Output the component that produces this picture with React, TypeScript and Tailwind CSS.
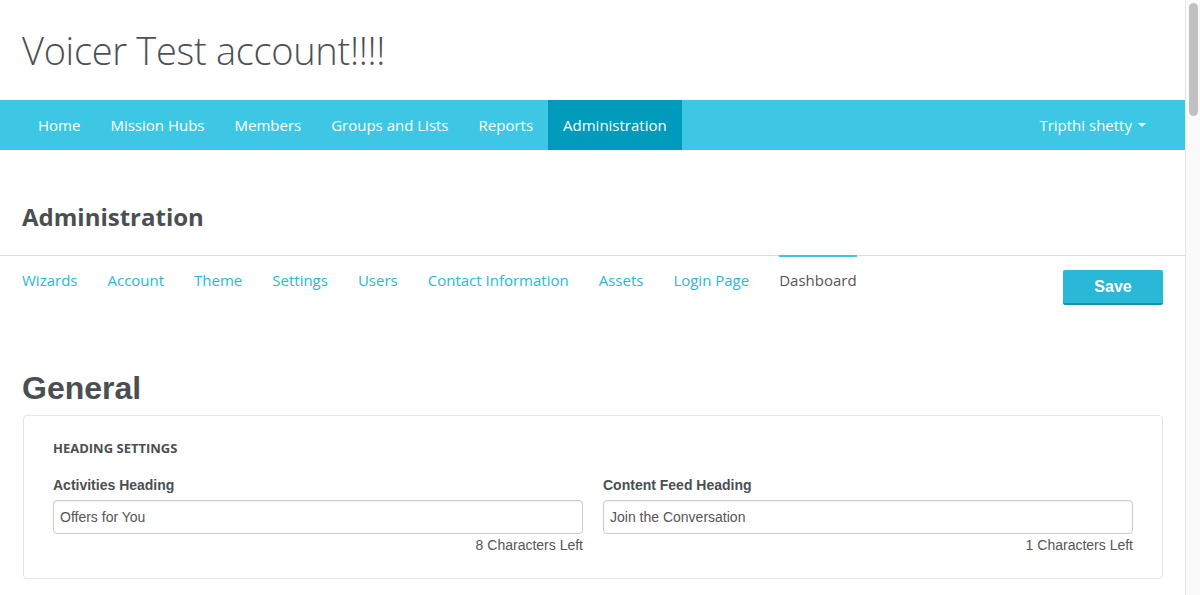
const navItems = ['Home', 'Mission Hubs', 'Members', 'Groups and Lists', 'Reports', 'Administration'];
const tabs = ['Wizards', 'Account', 'Theme', 'Settings', 'Users', 'Contact Information', 'Assets', 'Login Page', 'Dashboard'];

function Field({ label, value, left }: { label: string; value: string; left: string }) {
  return (
    <div className="flex-1 flex flex-col">
      <label className="text-[14px] font-bold text-[#4a4f52] leading-[20px] mb-[5px] font-['Liberation_Sans',Arial,sans-serif]">
        {label}
      </label>
      <div className="h-[34px] border border-[#cccccc] rounded-[4px] px-[6px] flex items-center text-[14px] text-[#555] font-['Liberation_Sans',Arial,sans-serif] shadow-[inset_0_1px_1px_rgba(0,0,0,0.05)]">
        {value}
      </div>
      <div className="text-right text-[14px] text-[#555] leading-[20px] mt-px font-['Liberation_Sans',Arial,sans-serif]">
        {left}
      </div>
    </div>
  );
}

export default function App() {
  return (
    <div className="flex w-[1200px] h-[595px] overflow-hidden bg-white font-['Open_Sans',sans-serif]">
      <div className="w-[1185px] flex flex-col">
        {/* Account title */}
        <div className="h-[100px] flex items-center px-[22px]">
          <h1 className="text-[38px] font-light text-[#4b5155] leading-none tracking-[-0.3px]">Voicer Test account!!!!</h1>
        </div>

        {/* Main nav */}
        <nav className="h-[50px] bg-[#3ec6e5] flex items-stretch justify-between pl-[23px] pr-[24px] text-white text-[15px]">
          <div className="flex">
            {navItems.map((item) => (
              <div
                key={item}
                className={`px-[15px] flex items-center ${item === 'Administration' ? 'bg-[#009abb]' : ''}`}
              >
                {item}
              </div>
            ))}
          </div>
          <div className="px-[15px] flex items-center gap-[6px]">
            Tripthi shetty
            <span className="w-0 h-0 border-l-[4px] border-r-[4px] border-t-[4px] border-l-transparent border-r-transparent border-t-white" />
          </div>
        </nav>

        {/* Page heading */}
        <div className="h-[106px] pt-[50px] px-[22px] border-b border-[#dddddd]">
          <h2 className="text-[24px] font-bold text-[#4a4f52] leading-[33px]">Administration</h2>
        </div>

        {/* Sub tabs */}
        <div className="flex justify-between items-start pl-[22px] pr-[22px]">
          <div className="flex gap-[30px] text-[15px]">
            {tabs.map((tab) =>
              tab === 'Dashboard' ? (
                <div key={tab} className="-mt-px border-t-2 border-[#3ec6e5] pt-[13px] text-[#555] leading-[20px]">
                  {tab}
                </div>
              ) : (
                <div key={tab} className="pt-[14px] text-[#29b8d8] leading-[20px]">
                  {tab}
                </div>
              )
            )}
          </div>
          <button className="mt-[14px] w-[100px] h-[35px] bg-[#29b8d8] border-b-2 border-[#1b8fab] rounded-[2px] text-white text-[16px] font-bold font-['Liberation_Sans',Arial,sans-serif]">
            Save
          </button>
        </div>

        {/* General section */}
        <div className="px-[22px] pt-[65px]">
          <h3 className="text-[32px] font-bold text-[#4a4f52] leading-[36px] font-['Liberation_Sans',Arial,sans-serif]">General</h3>
          <div className="mt-[9px] ml-px border border-[#e5e5e5] rounded-[4px] px-[29px] pt-[22px] pb-[23px]">
            <div className="text-[13px] font-bold text-[#4a4f52] leading-[20px] mb-[17px]">HEADING SETTINGS</div>
            <div className="flex gap-[20px]">
              <Field label="Activities Heading" value="Offers for You" left="8 Characters Left" />
              <Field label="Content Feed Heading" value="Join the Conversation" left="1 Characters Left" />
            </div>
          </div>
        </div>
      </div>

      {/* Scrollbar */}
      <div className="w-[15px] h-full bg-[#fafafa] border-l border-[#e8e8e8] pt-[3px] flex justify-center">
        <div className="w-[9px] h-[113px] rounded-full bg-[#c1c1c1]" />
      </div>
    </div>
  );
}
